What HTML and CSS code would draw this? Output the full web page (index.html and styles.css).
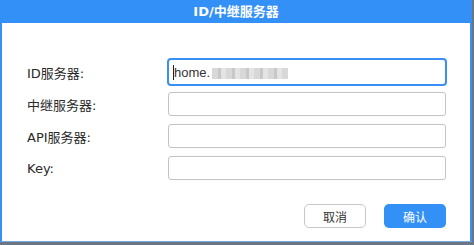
FILE: index.html
```html
<!DOCTYPE html>
<html lang="zh-CN">
<head>
    <meta charset="UTF-8">
    <title>ID/中继服务器</title>
    <link rel="stylesheet" href="styles.css">
</head>
<body>
    <div class="dialog">
        <header class="title">ID/中继服务器</header>
        <div class="content">
            <div class="form">
                <div class="row">
                    <label>ID服务器:</label>
                    <div class="input focused"><span class="caret"></span>home.<span class="blur"></span></div>
                </div>
                <div class="row">
                    <label>中继服务器:</label>
                    <div class="input"></div>
                </div>
                <div class="row">
                    <label>API服务器:</label>
                    <div class="input"></div>
                </div>
                <div class="row">
                    <label>Key:</label>
                    <div class="input"></div>
                </div>
            </div>
            <div class="actions">
                <button class="btn cancel">取消</button>
                <button class="btn ok">确认</button>
            </div>
        </div>
    </div>
</body>
</html>
```

FILE: styles.css
```css
body {
    margin: 0;
    width: 474px;
    height: 245px;
    background-color: #6b7682;
    font-family: "DejaVu Sans", "Noto Sans CJK SC", sans-serif;
    overflow: hidden;
}
.dialog {
    width: 468px;
    height: 241px;
    background: white;
    border-left: 2px solid #3a8ff5;
    border-right: 2px solid #3a8ff5;
    border-bottom: 1px solid #7aa9e0;
    box-sizing: content-box;
}
.title {
    height: 23px;
    line-height: 23px;
    background-color: #3390f7;
    color: white;
    text-align: center;
    font-weight: bold;
    font-size: 13px;
    margin: 0 -2px;
}
.content {
    padding: 37px 22px 0 25px;
}
.form {
    display: flex;
    flex-direction: column;
    gap: 8px;
}
.row {
    display: flex;
    align-items: center;
    height: 24px;
}
.row label {
    width: 141px;
    font-size: 13px;
    color: #2a2a2a;
}
.input {
    width: 278px;
    height: 24px;
    border: 1px solid #c4c4c4;
    border-radius: 3px;
    box-sizing: border-box;
    font-family: "Liberation Sans", sans-serif;
    font-size: 13px;
    color: #333;
    display: flex;
    align-items: center;
    padding-left: 5px;
}
.input.focused {
    border: 2px solid #3a8ff5;
    height: 28px;
    width: 280px;
    margin-left: -1px;
    border-radius: 4px;
    padding-left: 4px;
}
.caret {
    width: 1px;
    height: 15px;
    background: #222;
}
.blur {
    display: inline-block;
    width: 76px;
    height: 11px;
    margin-top: 3px;
    margin-left: 2px;
    background: repeating-linear-gradient(90deg, #d8d8d8 0 6px, #c8c8c8 6px 9px, #e4e4e4 9px 14px);
}
.actions {
    display: flex;
    justify-content: flex-end;
    gap: 18px;
    margin-top: 24px;
    margin-right: 2px;
}
.btn {
    width: 62px;
    height: 24px;
    border-radius: 5px;
    font-family: "Noto Sans CJK SC", sans-serif;
    font-size: 12px;
    padding: 0;
    cursor: pointer;
}
.cancel {
    background: white;
    border: 1px solid #c8c8c8;
    color: #333;
}
.ok {
    background: #3390f7;
    border: none;
    color: white;
}
```
